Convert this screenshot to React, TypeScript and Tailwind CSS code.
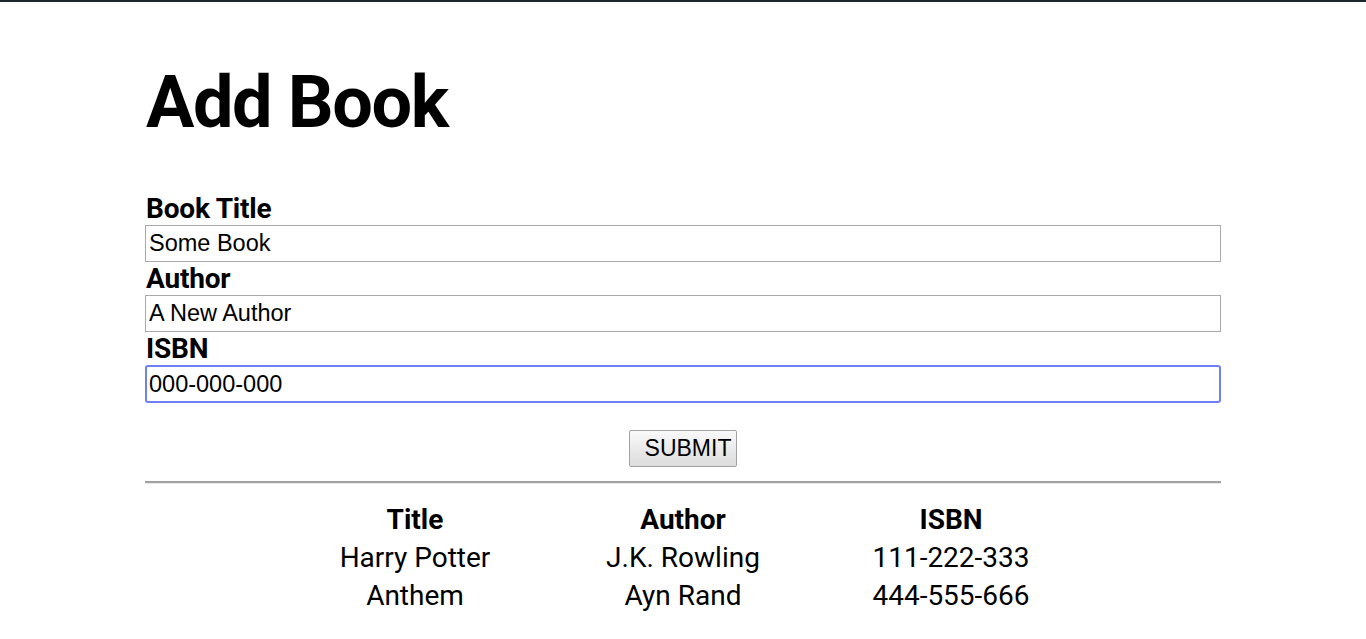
import { useState } from "react";

const books = [
  { title: "Harry Potter", author: "J.K. Rowling", isbn: "111-222-333" },
  { title: "Anthem", author: "Ayn Rand", isbn: "444-555-666" },
];

function Field({ label, value, focused }: { label: string; value: string; focused?: boolean }) {
  const [val, setVal] = useState(value);
  return (
    <div className="flex flex-col">
      <label className="text-[28px] font-bold leading-[33px] text-black font-['Roboto',sans-serif] pl-[1px] tracking-[-0.2px]">
        {label}
      </label>
      <input
        value={val}
        onChange={(e) => setVal(e.target.value)}
        className={
          focused
            ? "h-[38px] w-full px-[2px] text-[23.5px] font-['Liberation_Sans',Arial,sans-serif] text-black border-2 border-[#6f80f3] rounded-[3px] outline-none"
            : "h-[37px] w-full px-[3px] text-[23.5px] font-['Liberation_Sans',Arial,sans-serif] text-black border border-[#a9a9a9] outline-none"
        }
      />
    </div>
  );
}

export default function App() {
  return (
    <div className="min-h-screen bg-white">
      <div className="h-[2px] bg-[#1f2630]" />
      <div className="w-[1076px] mx-auto">
        <h1 className="mt-[65px] mb-[53px] text-[72px] leading-[72px] font-bold text-black font-['Roboto',sans-serif] pl-[1px] tracking-[-1.4px]">
          Add Book
        </h1>

        <form onSubmit={(e) => e.preventDefault()}>
          <Field label="Book Title" value="Some Book" />
          <Field label="Author" value="A New Author" />
          <Field label="ISBN" value="000-000-000" focused />

          <div className="flex justify-center mt-[27px]">
            <button
              type="submit"
              className="h-[37px] w-[108px] pl-[10px] text-[23px] font-['Liberation_Sans',Arial,sans-serif] text-black border border-[#a3a3a3] rounded-[2px] bg-gradient-to-b from-[#f9f9f9] to-[#dcdcdc]"
            >
              SUBMIT
            </button>
          </div>
        </form>

        <div className="mt-[14px] border-t-2 border-[#a2a2a2]">
          <div className="h-px bg-[#ececec]" />
        </div>

        <div className="mt-[17px] flex justify-center font-['Roboto',sans-serif] text-[28px] text-black">
          <div className="grid grid-cols-[268px_268px_268px] text-center">
            <div className="h-[38px] leading-[38px] font-bold">Title</div>
            <div className="h-[38px] leading-[38px] font-bold">Author</div>
            <div className="h-[38px] leading-[38px] font-bold">ISBN</div>
            {books.map((b) => (
              <>
                <div key={b.isbn + "t"} className="h-[38px] leading-[38px]">{b.title}</div>
                <div key={b.isbn + "a"} className="h-[38px] leading-[38px]">{b.author}</div>
                <div key={b.isbn + "i"} className="h-[38px] leading-[38px]">{b.isbn}</div>
              </>
            ))}
          </div>
        </div>
      </div>
    </div>
  );
}
